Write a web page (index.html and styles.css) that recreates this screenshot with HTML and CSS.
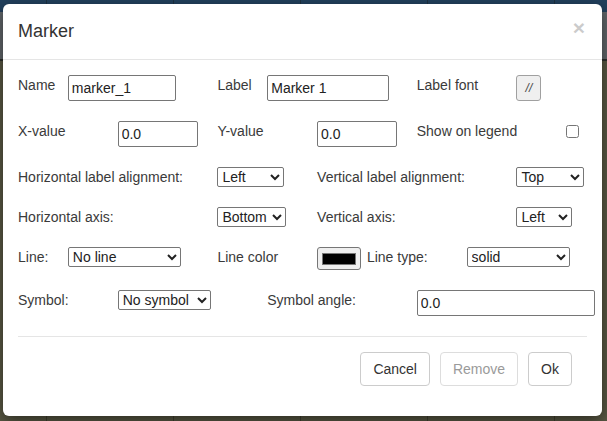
FILE: index.html
```html
<!DOCTYPE html>
<html>
<head>
<meta charset="utf-8">
<link rel="stylesheet" href="styles.css">
</head>
<body>
<div class="modal">
  <div class="modal-header">
    <span class="close">&times;</span>
    <h4 class="modal-title">Marker</h4>
  </div>
  <div class="modal-body">
    <div class="row">
      <label class="c1">Name</label>
      <input class="c2 txt w-name" type="text" value="marker_1">
      <label class="c5">Label</label>
      <input class="c6 txt w-label" type="text" value="Marker 1">
      <label class="c9">Label font</label>
      <button class="c11 font-btn" type="button">//</button>
    </div>
    <div class="row">
      <label class="c1">X-value</label>
      <input class="c3 txt w-num" type="text" value="0.0">
      <label class="c5">Y-value</label>
      <input class="c7 txt w-num" type="text" value="0.0">
      <label class="c9">Show on legend</label>
      <input class="c12 chk" type="checkbox">
    </div>
    <div class="row">
      <label class="c1 wide">Horizontal label alignment:</label>
      <select class="c5 sel w-halign"><option>Left</option><option>Center</option><option>Right</option></select>
      <label class="c7 wide">Vertical label alignment:</label>
      <select class="c11 sel w-valign"><option>Top</option><option>Middle</option><option>Bottom</option></select>
    </div>
    <div class="row">
      <label class="c1 wide">Horizontal axis:</label>
      <select class="c5 sel w-haxis"><option>Bottom</option><option>Top</option></select>
      <label class="c7 wide">Vertical axis:</label>
      <select class="c11 sel w-vaxis"><option>Left</option><option>Right</option></select>
    </div>
    <div class="row">
      <label class="c1">Line:</label>
      <select class="c2 sel w-line"><option>No line</option></select>
      <label class="c5">Line color</label>
      <button class="c7 color-btn" type="button"><span class="swatch"></span></button>
      <label class="c8">Line type:</label>
      <select class="c10 sel w-ltype"><option>solid</option><option>dashed</option></select>
    </div>
    <div class="row last">
      <label class="c1">Symbol:</label>
      <select class="c3 sel w-sym"><option>No symbol</option></select>
      <label class="c6 wide">Symbol angle:</label>
      <input class="c9 txt w-angle" type="text" value="0.0">
    </div>
    <hr class="sep">
  </div>
  <div class="modal-footer">
    <button class="btn" type="button">Cancel</button>
    <button class="btn" type="button" disabled>Remove</button>
    <button class="btn" type="button">Ok</button>
  </div>
</div>
</body>
</html>
```
FILE: styles.css
```css
html, body {
  margin: 0;
  padding: 0;
}
body {
  width: 607px;
  height: 421px;
  overflow: hidden;
  font-family: "Liberation Sans", Arial, sans-serif;
  font-size: 14px;
  color: #3a3a3a;
  background:
    repeating-linear-gradient(90deg, transparent 0 46px, rgba(20,20,10,0.35) 46px 47px, transparent 47px 127px),
    linear-gradient(180deg, #22405d 0 12px, #62676b 12px 59px, #2d2f2c 59px 61px, #5a5944 61px 100%);
}
.modal {
  margin: 4px 0 0 3px;
  width: 599px;
  height: 412px;
  background: #fff;
  border-radius: 6px;
  box-shadow: 0 5px 15px rgba(0,0,0,0.5);
  box-sizing: border-box;
}
.modal-header {
  padding: 15px;
  border-bottom: 1px solid #e5e5e5;
}
.modal-title {
  margin: 0;
  font-size: 18px;
  font-weight: normal;
  line-height: 25px;
  color: #333;
}
.close {
  float: right;
  margin-top: -2px;
  margin-right: 2px;
  font-size: 21px;
  font-weight: bold;
  line-height: 1;
  color: #000;
  opacity: 0.2;
}
.modal-body {
  padding: 15px 15px 0;
}
.row {
  display: grid;
  grid-template-columns: repeat(12, 49.85px);
  align-items: start;
  justify-items: start;
  margin-bottom: 20px;
}
.row.last { margin-bottom: 0; }
.row label {
  line-height: 20px;
  white-space: nowrap;
}
.c1 { grid-column: 1; }
.c2 { grid-column: 2; }
.c3 { grid-column: 3; }
.c5 { grid-column: 5; }
.c6 { grid-column: 6; }
.c7 { grid-column: 7; }
.c8 { grid-column: 8; }
.c9 { grid-column: 9; }
.c10 { grid-column: 10; }
.c11 { grid-column: 11; }
.c12 { grid-column: 12; }
.txt {
  box-sizing: border-box;
  height: 26px;
  margin: 0;
  padding: 1px 3px;
  border: 1px solid #767676;
  border-radius: 2px;
  font-family: "Liberation Sans", Arial, sans-serif;
  font-size: 14px;
  color: #222;
  background: #fff;
}
.w-name { width: 108px; }
.w-label { width: 122px; }
.w-num { width: 80px; }
.w-angle { width: 178px; }
.sel {
  box-sizing: border-box;
  height: 20px;
  margin: 0;
  padding: 0;
  border: 1px solid #767676;
  border-radius: 2px;
  font-family: "Liberation Sans", Arial, sans-serif;
  font-size: 14px;
  color: #222;
  background: #fff;
}
.w-halign { width: 67px; }
.w-valign { width: 68px; }
.w-haxis { width: 69px; }
.w-vaxis { width: 56px; }
.w-line { width: 113px; }
.w-ltype { width: 103px; }
.w-sym { width: 93px; }
.font-btn {
  box-sizing: border-box;
  width: 25px;
  height: 26px;
  margin: 0;
  padding: 0;
  border: 1px solid #a0a0a0;
  border-radius: 3px;
  background: #efefef;
  font-family: "Liberation Sans", Arial, sans-serif;
  font-size: 12px;
  font-style: italic;
  color: #444;
}
.chk {
  width: 13px;
  height: 13px;
  margin: 4px 0 0 0;
}
.color-btn {
  box-sizing: border-box;
  width: 44px;
  height: 23px;
  margin: 0;
  padding: 0;
  display: flex;
  align-items: center;
  justify-content: center;
  border: 1px solid #767676;
  border-radius: 3px;
  background: #efefef;
}
.swatch {
  display: block;
  width: 34px;
  height: 12px;
  background: #000;
  border: 1px solid #777;
  box-sizing: border-box;
}
.sep {
  margin: 20px 0 0;
  border: 0;
  border-top: 1px solid #e5e5e5;
  height: 0;
}
.modal-footer {
  display: flex;
  justify-content: flex-end;
  gap: 10px;
  padding: 15px 30px 0 0;
}
.btn {
  box-sizing: border-box;
  height: 34px;
  margin: 0;
  padding: 6px 12px;
  border: 1px solid #ccc;
  border-radius: 4px;
  background: #fff;
  font-family: "Liberation Sans", Arial, sans-serif;
  font-size: 14px;
  line-height: 20px;
  color: #333;
}
.btn:disabled {
  color: #9a9a9a;
  border-color: #ddd;
}
```
